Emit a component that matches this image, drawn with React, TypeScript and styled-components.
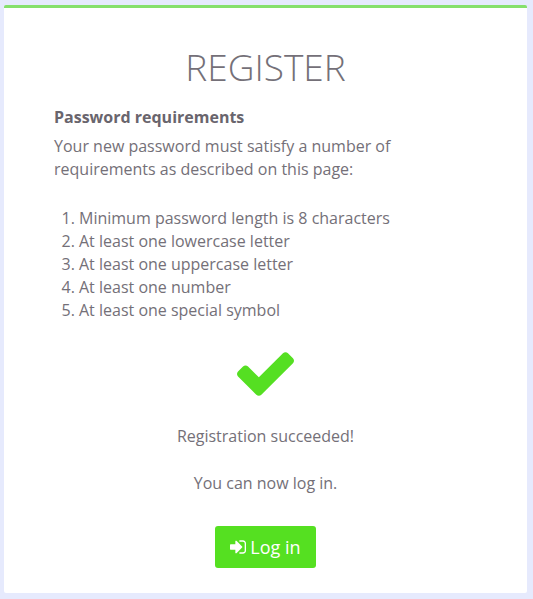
import React from "react";
import styled, { createGlobalStyle } from "styled-components";

const GlobalStyle = createGlobalStyle`
  * { box-sizing: border-box; }
  body {
    margin: 0;
    background: #e6eafd;
    color: #747078;
    font: 400 16px/23px "Open Sans", sans-serif;
  }
`;

const Page = styled.div`
  min-height: 100vh;
  padding: 5px 6px 6px 4px;
  display: flex;
`;

const Card = styled.main`
  flex: 1;
  padding: 35px 50px 24px;
  background: #fff;
  border-top: 3px solid #86e06c;
  border-radius: 2px;
`;

const Title = styled.h1`
  margin: 0 0 15px;
  font-size: 37px;
  line-height: 48px;
  font-weight: 300;
  text-align: center;
`;

const Subtitle = styled.h2`
  margin: 0 0 6px;
  color: #69656d;
  font-size: 16px;
  line-height: 23px;
  font-weight: 700;
`;

const Intro = styled.p`
  max-width: 360px;
  margin: 0 0 26px;
`;

const Rules = styled.ol`
  margin: 0 0 30px;
  padding-left: 25px;
`;

const Result = styled.section`
  display: flex;
  flex-direction: column;
  align-items: center;
`;

const CheckIcon = styled.svg`
  width: 57px;
  height: 44px;
  margin-bottom: 29px;
  fill: #55df22;
`;

const Message = styled.p`
  margin: 0 0 24px;
`;

const LoginButton = styled.button`
  display: flex;
  align-items: center;
  gap: 4px;
  margin-top: 7px;
  padding: 8px 15px;
  border: 0;
  border-radius: 3px;
  background: #55e021;
  color: #fff;
  font: 400 18px/26px "Open Sans", sans-serif;
  cursor: pointer;
`;

const SignInIcon = styled.svg`
  width: 16px;
  height: 14px;
  fill: currentColor;
`;

const rules = [
  "Minimum password length is 8 characters",
  "At least one lowercase letter",
  "At least one uppercase letter",
  "At least one number",
  "At least one special symbol",
];

export default function App() {
  return (
    <Page>
      <GlobalStyle />
      <Card>
        <Title>REGISTER</Title>
        <Subtitle>Password requirements</Subtitle>
        <Intro>
          Your new password must satisfy a number of requirements as described on this page:
        </Intro>
        <Rules>
          {rules.map((rule) => (
            <li key={rule}>{rule}</li>
          ))}
        </Rules>
        <Result>
          <CheckIcon viewBox="121 334 1550 1188" aria-hidden="true">
            <path d="M1671 566q0 40-28 68l-724 724-136 136q-28 28-68 28t-68-28l-136-136-362-362q-28-28-28-68t28-68l136-136q28-28 68-28t68 28l294 295 656-657q28-28 68-28t68 28l136 136q28 28 28 68z" />
          </CheckIcon>
          <Message>Registration succeeded!</Message>
          <Message>You can now log in.</Message>
          <LoginButton type="button">
            <SignInIcon viewBox="128 256 1536 1280" aria-hidden="true">
              <path d="M1312 896q0 26-19 45l-544 544q-19 19-45 19t-45-19-19-45v-288h-448q-26 0-45-19t-19-45v-384q0-26 19-45t45-19h448v-288q0-26 19-45t45-19 45 19l544 544q19 19 19 45zm352-352v704q0 119-84.5 203.5t-203.5 84.5h-320q-13 0-22.5-9.5t-9.5-22.5q0-4-1-20t-.5-26.5 3-23.5 10-19.5 20.5-6.5h320q66 0 113-47t47-113v-704q0-66-47-113t-113-47h-312l-11.5-1-11.5-3-8-5.5-7-9-2-13.5q0-4-1-20t-.5-26.5 3-23.5 10-19.5 20.5-6.5h320q119 0 203.5 84.5t84.5 203.5z" />
            </SignInIcon>
            Log in
          </LoginButton>
        </Result>
      </Card>
    </Page>
  );
}
